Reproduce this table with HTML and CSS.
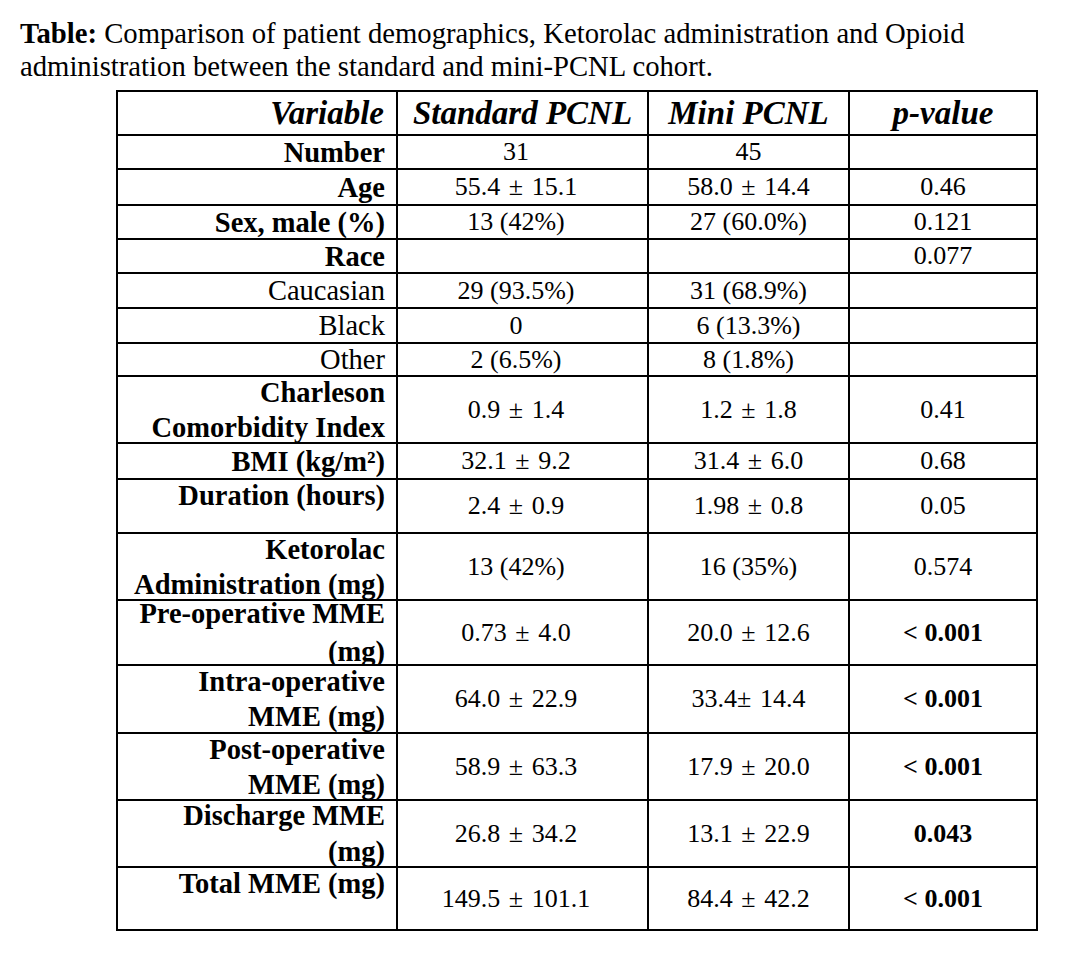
FILE: index.html
```html
<!DOCTYPE html>
<html>
<head>
<meta charset="utf-8">
<link rel="stylesheet" href="styles.css">
</head>
<body>
<div class="page">
  <p class="caption"><b>Table:</b> Comparison of patient demographics, Ketorolac administration and Opioid administration between the standard and mini-PCNL cohort.</p>
  <div class="grid">
    <div class="cell head lab"><span>Variable</span></div>
    <div class="cell head c2"><span>Standard PCNL</span></div>
    <div class="cell head"><span>Mini PCNL</span></div>
    <div class="cell head"><span>p-value</span></div>

    <div class="cell lab"><span>Number</span></div>
    <div class="cell val c2">31</div>
    <div class="cell val">45</div>
    <div class="cell val"></div>

    <div class="cell lab"><span>Age</span></div>
    <div class="cell val c2">55.4 <span class="pm">±</span> 15.1</div>
    <div class="cell val">58.0 <span class="pm">±</span> 14.4</div>
    <div class="cell val">0.46</div>

    <div class="cell lab"><span>Sex, male (%)</span></div>
    <div class="cell val c2">13 (42%)</div>
    <div class="cell val">27 (60.0%)</div>
    <div class="cell val">0.121</div>

    <div class="cell lab"><span>Race</span></div>
    <div class="cell val c2"></div>
    <div class="cell val"></div>
    <div class="cell val">0.077</div>

    <div class="cell lab reg"><span>Caucasian</span></div>
    <div class="cell val c2">29 (93.5%)</div>
    <div class="cell val">31 (68.9%)</div>
    <div class="cell val"></div>

    <div class="cell lab reg"><span>Black</span></div>
    <div class="cell val c2">0</div>
    <div class="cell val">6 (13.3%)</div>
    <div class="cell val"></div>

    <div class="cell lab reg"><span>Other</span></div>
    <div class="cell val c2">2 (6.5%)</div>
    <div class="cell val">8 (1.8%)</div>
    <div class="cell val"></div>

    <div class="cell lab"><span>Charleson<br>Comorbidity Index</span></div>
    <div class="cell val c2">0.9 <span class="pm">±</span> 1.4</div>
    <div class="cell val">1.2 <span class="pm">±</span> 1.8</div>
    <div class="cell val">0.41</div>

    <div class="cell lab"><span>BMI (kg/m²)</span></div>
    <div class="cell val c2">32.1 <span class="pm">±</span> 9.2</div>
    <div class="cell val">31.4 <span class="pm">±</span> 6.0</div>
    <div class="cell val">0.68</div>

    <div class="cell lab top"><span>Duration (hours)</span></div>
    <div class="cell val c2">2.4 <span class="pm">±</span> 0.9</div>
    <div class="cell val">1.98 <span class="pm">±</span> 0.8</div>
    <div class="cell val">0.05</div>

    <div class="cell lab"><span>Ketorolac<br>Administration (mg)</span></div>
    <div class="cell val c2">13 (42%)</div>
    <div class="cell val">16 (35%)</div>
    <div class="cell val">0.574</div>

    <div class="cell lab loose"><span>Pre-operative MME<br>(mg)</span></div>
    <div class="cell val c2">0.73 <span class="pm">±</span> 4.0</div>
    <div class="cell val">20.0 <span class="pm">±</span> 12.6</div>
    <div class="cell val sig">&lt; 0.001</div>

    <div class="cell lab"><span>Intra-operative<br>MME (mg)</span></div>
    <div class="cell val c2">64.0 <span class="pm">±</span> 22.9</div>
    <div class="cell val">33.4<span class="pm tight">±</span> 14.4</div>
    <div class="cell val sig">&lt; 0.001</div>

    <div class="cell lab"><span>Post-operative<br>MME (mg)</span></div>
    <div class="cell val c2">58.9 <span class="pm">±</span> 63.3</div>
    <div class="cell val">17.9 <span class="pm">±</span> 20.0</div>
    <div class="cell val sig">&lt; 0.001</div>

    <div class="cell lab mid"><span>Discharge MME<br>(mg)</span></div>
    <div class="cell val c2">26.8 <span class="pm">±</span> 34.2</div>
    <div class="cell val">13.1 <span class="pm">±</span> 22.9</div>
    <div class="cell val sig">0.043</div>

    <div class="cell lab top"><span>Total MME (mg)</span></div>
    <div class="cell val c2">149.5 <span class="pm">±</span> 101.1</div>
    <div class="cell val">84.4 <span class="pm">±</span> 42.2</div>
    <div class="cell val sig">&lt; 0.001</div>
  </div>
</div>
</body>
</html>
```

FILE: styles.css
```css
html, body {
  margin: 0;
  padding: 0;
  background: #fff;
}

body {
  font-family: "Liberation Serif", "Times New Roman", serif;
  color: #000;
}

.page {
  padding: 17px 0 0 20px;
}

.caption {
  margin: 0;
  font-size: 28.7px;
  line-height: normal;
}

.grid {
  display: grid;
  grid-template-columns: 278px 249px 199px 186px;
  grid-template-rows: 42px 32px 34px 32px 32px 33px 33px 31px 65px 34px 52px 65px 63px 66px 65px 65px 61px;
  gap: 2px;
  padding: 2px;
  background: #000;
  width: max-content;
  margin: 7px 0 0 96px;
}

.cell {
  background: #fff;
  display: flex;
  align-items: center;
  justify-content: center;
  overflow: hidden;
  white-space: nowrap;
}

.head {
  font-size: 33px;
  font-weight: bold;
  font-style: italic;
  line-height: 36px;
}

.lab {
  justify-content: flex-end;
  text-align: right;
  padding-right: 11px;
  font-size: 28.5px;
  font-weight: bold;
  line-height: 35px;
}

.lab.reg {
  font-weight: normal;
}

.lab.top {
  align-items: flex-start;
  line-height: 31px;
}

.lab.loose {
  line-height: 38px;
}

.lab.mid {
  line-height: 36px;
}

.head.lab {
  font-size: 33px;
  line-height: 36px;
  padding-right: 12px;
}

.val {
  font-size: 26px;
  line-height: 30px;
  white-space: pre;
}

.pm {
  margin: 0 2px;
}

.pm.tight {
  margin-left: 0;
}

.c2 {
  padding-right: 13px;
}

.head.c2 {
  padding-right: 0;
}

.sig {
  font-weight: bold;
}
```
